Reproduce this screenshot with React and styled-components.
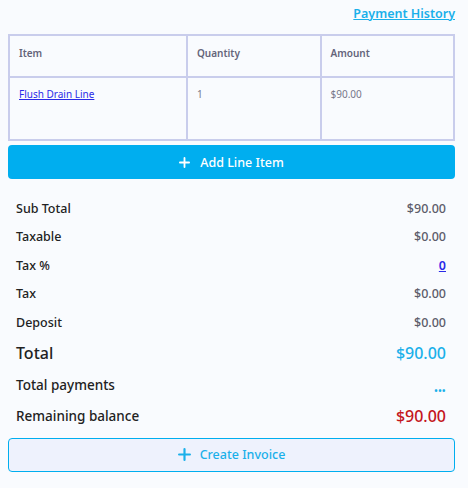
import React from "react";
import styled, { createGlobalStyle } from "styled-components";

const Global = createGlobalStyle`
  html, body { margin: 0; padding: 0; background: #f9fbfe; }
  body { font-family: "Noto Sans", "Open Sans", sans-serif; }
  * { box-sizing: border-box; }
`;

const Page = styled.div`
  padding: 0 13px 16px 8px;
  width: 468px;
`;

const TopBar = styled.div`
  display: flex;
  justify-content: flex-end;
  height: 26px;
  margin-bottom: 8px;
  align-items: center;
`;

const HistoryLink = styled.a`
  color: #1ab0ea;
  font-size: 12.5px;
  font-weight: 600;
  text-decoration: underline;
  cursor: pointer;
`;

const Table = styled.table`
  width: 100%;
  border-collapse: separate;
  border-spacing: 0;
  border: 1px solid #c9cdec;
  font-size: 10px;
`;

const Th = styled.th`
  border: 1px solid #c9cdec;
  height: 42px;
  padding: 0 9px 6px;
  text-align: left;
  font-weight: 600;
  color: #64647a;
  width: ${(p) => p.$w};
`;

const Td = styled.td`
  border: 1px solid #c9cdec;
  height: 63px;
  padding: 9px 9px;
  vertical-align: top;
  color: #77778a;
`;

const ItemLink = styled.a`
  color: #2a2ae8;
  text-decoration: underline;
`;

const AddButton = styled.button`
  display: flex;
  align-items: center;
  justify-content: center;
  gap: 10px;
  width: 100%;
  height: 34px;
  margin-top: 4px;
  border: none;
  border-radius: 4px;
  background: #00aeef;
  color: #fff;
  font-family: inherit;
  font-size: 12.5px;
  font-weight: 500;
`;

const Summary = styled.div`
  padding: 15px 9px 5px 8px;
  display: flex;
  flex-direction: column;
`;

const Row = styled.div`
  display: flex;
  justify-content: space-between;
  align-items: center;
  height: ${(p) => p.$h || 28.5}px;
`;

const Label = styled.span`
  font-size: ${(p) => p.$size || 12.5}px;
  font-weight: 500;
  color: #222;
`;

const Value = styled.span`
  font-size: ${(p) => p.$size || 12.5}px;
  font-weight: 500;
  color: ${(p) => p.$color || "#5c5c6a"};
`;

const TaxLink = styled.a`
  font-size: 12.5px;
  font-weight: 600;
  color: #2a2ae8;
  text-decoration: underline;
`;

const Dots = styled.span`
  align-self: flex-end;
  color: #1ab0ea;
  font-size: 9px;
  font-weight: 700;
  line-height: 1;
  letter-spacing: 0.5px;
  padding-bottom: 5px;
`;

const CreateButton = styled.button`
  display: flex;
  align-items: center;
  justify-content: center;
  gap: 9px;
  width: 100%;
  height: 34px;
  border: 1.5px solid #00aeef;
  border-radius: 4px;
  background: #eef2fd;
  color: #1ab0ea;
  font-family: inherit;
  font-size: 12.5px;
  font-weight: 500;
`;

const Plus = ({ size = 11, w = 2 }) => (
  <svg width={size} height={size} viewBox="0 0 12 12">
    <path d="M6 1v10M1 6h10" stroke="currentColor" strokeWidth={w} strokeLinecap="round" />
  </svg>
);

export default function App() {
  return (
    <Page>
      <Global />
      <TopBar>
        <HistoryLink>Payment History</HistoryLink>
      </TopBar>
      <Table>
        <thead>
          <tr>
            <Th $w="40%">Item</Th>
            <Th $w="30%">Quantity</Th>
            <Th $w="30%">Amount</Th>
          </tr>
        </thead>
        <tbody>
          <tr>
            <Td><ItemLink>Flush Drain Line</ItemLink></Td>
            <Td>1</Td>
            <Td>$90.00</Td>
          </tr>
        </tbody>
      </Table>
      <AddButton><Plus /> Add Line Item</AddButton>
      <Summary>
        <Row><Label>Sub Total</Label><Value>$90.00</Value></Row>
        <Row><Label>Taxable</Label><Value>$0.00</Value></Row>
        <Row><Label>Tax %</Label><TaxLink>0</TaxLink></Row>
        <Row><Label>Tax</Label><Value>$0.00</Value></Row>
        <Row><Label>Deposit</Label><Value>$0.00</Value></Row>
        <Row $h={33}><Label $size={16}>Total</Label><Value $size={16} $color="#1ab0ea">$90.00</Value></Row>
        <Row $h={30}><Label $size={13.5}>Total payments</Label><Dots>•••</Dots></Row>
        <Row $h={33}><Label $size={13.5}>Remaining balance</Label><Value $size={16} $color="#c4161c">$90.00</Value></Row>
      </Summary>
      <CreateButton><Plus size={13} /> Create Invoice</CreateButton>
    </Page>
  );
}
